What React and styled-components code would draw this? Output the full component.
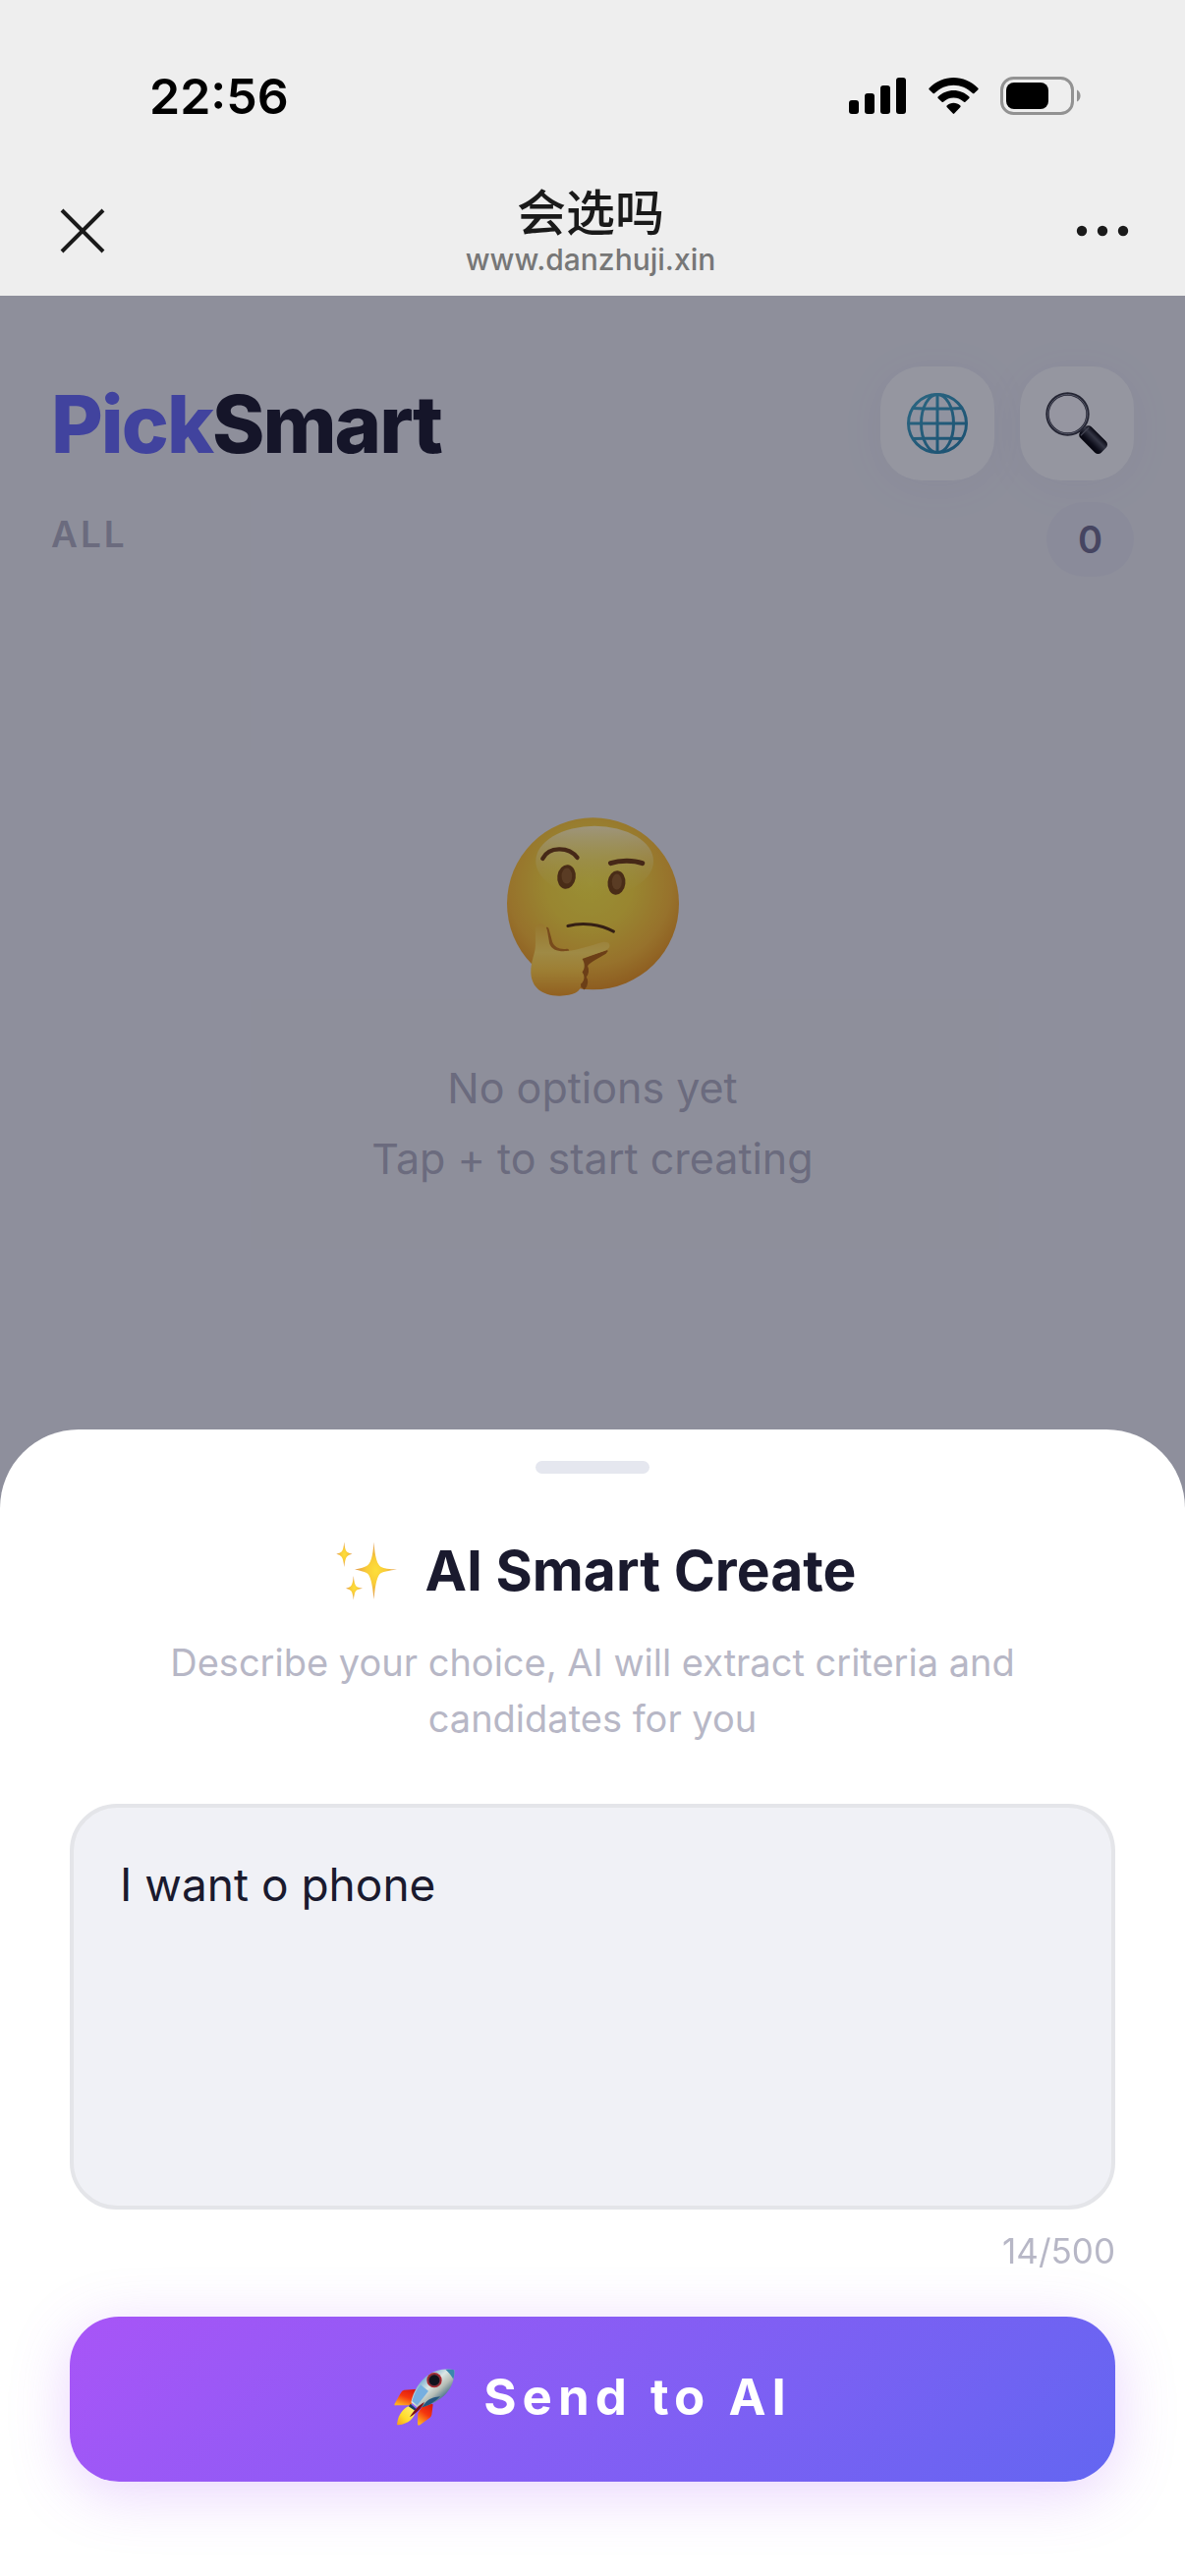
import { useState } from 'react';
import styled, { createGlobalStyle } from 'styled-components';

const MAX_LENGTH = 500;

const SignalIcon = () => (
  <svg width='59' height='38' viewBox='0 0 59 38' aria-hidden='true'>
    <rect x='0' y='23' width='10' height='14' rx='3' />
    <rect x='16' y='16' width='10' height='21' rx='3' />
    <rect x='32' y='8' width='10' height='29' rx='3' />
    <rect x='48' y='0' width='10' height='37' rx='3' />
  </svg>
);

const WifiIcon = () => (
  <svg width='51' height='38' viewBox='0 0 51 38' aria-hidden='true'>
    <path d='M.6 10.8C14.5-3.6 36.5-3.6 50.4 10.8Q51 11.5 50.4 12.2L46.4 16Q45.7 16.6 45 16C34 4.9 17 4.9 6 16Q5.3 16.6 4.6 16L.6 12.2Q0 11.5 .6 10.8Z' />
    <path d='M9.6 19.6C18.4 10.7 32.6 10.7 41.4 19.6Q42 20.3 41.4 21L37.4 24.7Q36.7 25.2 36 24.7C30 19 21 19 15 24.7Q14.3 25.2 13.6 24.7L9.6 21Q9 20.3 9.6 19.6Z' />
    <path d='M18.6 28.5C22.6 24.7 28.4 24.7 32.4 28.5Q33 29.2 32.4 29.9L26.2 36.6Q25.5 37.3 24.8 36.6L18.6 29.9Q18 29.2 18.6 28.5Z' />
  </svg>
);

const BatteryIcon = () => (
  <svg width='83' height='40' viewBox='0 0 83 40' aria-hidden='true'>
    <rect x='1.5' y='1.5' width='72' height='36' rx='12' fill='none' stroke='#929292' strokeWidth='3' />
    <rect x='6' y='6' width='43' height='27' rx='8' />
    <path d='M78 13.5C82.8 15.5 82.8 23.5 78 25.5Z' fill='#929292' />
  </svg>
);

const CloseIcon = () => (
  <svg width='46' height='46' viewBox='0 0 46 46' fill='none' stroke='#1a1a1a' strokeWidth='4' aria-hidden='true'>
    <path d='M2 2L44 44M44 2L2 44' />
  </svg>
);

const MoreIcon = () => (
  <svg width='54' height='12' viewBox='0 0 54 12' fill='#1a1a1a' aria-hidden='true'>
    <circle cx='6' cy='6' r='5.2' />
    <circle cx='27' cy='6' r='5.2' />
    <circle cx='48' cy='6' r='5.2' />
  </svg>
);

const GlobeIcon = () => (
  <svg width='64' height='64' viewBox='0 0 64 64' fill='none' aria-hidden='true'>
    <defs>
      <linearGradient id='globeLine' gradientUnits='userSpaceOnUse' x1='8' y1='4' x2='56' y2='60'>
        <stop offset='0' stopColor='#3d9fc0' />
        <stop offset='1' stopColor='#267fa8' />
      </linearGradient>
    </defs>
    <circle cx='32' cy='32' r='29.5' fill='#e6ebf3' />
    <g stroke='url(#globeLine)' strokeWidth='3'>
      <circle cx='32' cy='32' r='29.5' />
      <ellipse cx='32' cy='32' rx='16.5' ry='29.5' />
      <path d='M7 16.5Q32 17.5 57 16.5M7 47.5Q32 46.5 57 47.5M32 2V62M2 32H62' />
    </g>
  </svg>
);

const SearchIcon = () => (
  <svg width='64' height='64' viewBox='0 0 64 64' fill='none' aria-hidden='true'>
    <defs>
      <linearGradient id='handle' x1='0' y1='0' x2='0' y2='1'>
        <stop offset='0' stopColor='#05050a' />
        <stop offset='.35' stopColor='#4e515c' />
        <stop offset='.75' stopColor='#0c0d14' />
        <stop offset='1' stopColor='#000' />
      </linearGradient>
    </defs>
    <path d='M36 38L42 44' stroke='#55575f' strokeWidth='5' />
    <circle cx='22.5' cy='22.5' r='20.5' fill='#f0f1f5' stroke='#33343f' strokeWidth='3.4' />
    <circle cx='22.5' cy='22.5' r='20' stroke='#858896' strokeWidth='1' />
    <g transform='translate(38 38) rotate(45)'>
      <rect x='0' y='-8' width='30' height='16' rx='4.5' fill='url(#handle)' />
      <path d='M3-6V6' stroke='#6c6e79' strokeWidth='1.2' />
    </g>
  </svg>
);

const ThinkingFace = () => (
  <svg width='177' height='183' viewBox='101 96 532 550' fill='none' aria-hidden='true'>
    <defs>
      <radialGradient id='face' cx='.48' cy='.38' r='.64'>
        <stop offset='0' stopColor='#f7e43f' />
        <stop offset='.4' stopColor='#f5d53a' />
        <stop offset='.75' stopColor='#f2b432' />
        <stop offset='1' stopColor='#e08c1c' />
      </radialGradient>
      <linearGradient id='shine' x1='0' y1='0' x2='0' y2='1'>
        <stop offset='0' stopColor='#fff6d0' stopOpacity='.85' />
        <stop offset='1' stopColor='#f7e04a' stopOpacity='0' />
      </linearGradient>
      <linearGradient id='hand' gradientUnits='userSpaceOnUse' x1='0' y1='420' x2='0' y2='642'>
        <stop offset='0' stopColor='#f3bd35' />
        <stop offset='.4' stopColor='#ffdc5c' />
        <stop offset='.65' stopColor='#fcc93f' />
        <stop offset='1' stopColor='#e8961f' />
      </linearGradient>
    </defs>
    <circle cx='367' cy='360' r='263' fill='url(#face)' />
    <ellipse cx='372' cy='230' rx='180' ry='108' fill='url(#shine)' />
    <path d='M213 222C232 185 292 184 319 219' stroke='#6b3a10' strokeWidth='13' strokeLinecap='round' />
    <path d='M421 236C448 227 490 226 518 236' stroke='#6b3a10' strokeWidth='15' strokeLinecap='round' />
    <ellipse cx='286' cy='278' rx='28' ry='37' transform='rotate(8 286 278)' fill='#71400f' />
    <ellipse cx='439' cy='296' rx='27' ry='37' transform='rotate(6 439 296)' fill='#71400f' />
    <ellipse cx='287' cy='275' rx='16' ry='24' fill='#8c5a25' />
    <ellipse cx='440' cy='293' rx='15' ry='24' fill='#8c5a25' />
    <path d='M290 428C335 417 388 422 430 445' stroke='#4e2a0a' strokeWidth='9' strokeLinecap='round' />
    <path d='M226 438L238 482C246 500 262 507 288 504' stroke='#bf7418' strokeWidth='12' strokeLinecap='round' />
    <path
      d='M336 528L410 505L404 512C375 530 355 537 348 550C355 566 352 574 344 584C352 596 350 608 340 620L326 606Z'
      fill='#ab5f10'
      stroke='#ab5f10'
      strokeWidth='5'
      strokeLinejoin='round'
    />
    <path
      d='M191 446C189 414 221 414 227 442L234 482C240 500 259 507 286 505C324 502 360 488 396 478C421 473 426 495 405 503L334 529C343 542 343 560 334 569C344 582 340 597 330 605C333 629 306 642 266 642C212 643 179 617 177 572C176 535 190 515 191 488Z'
      fill='url(#hand)'
    />
  </svg>
);

const SparklesIcon = () => (
  <svg width='62' height='60' viewBox='0 0 62 60' aria-hidden='true'>
    <defs>
      <radialGradient id='spark'>
        <stop offset='0' stopColor='#fddf3a' />
        <stop offset='.45' stopColor='#f9cc38' />
        <stop offset='1' stopColor='#e0964c' />
      </radialGradient>
    </defs>
    <g fill='url(#spark)'>
      <path d='M38.5.5C39.5 16 42 24 46 26Q50 28 62 28.5Q50 30 46 32C42 34 40 43 38.5 59C37 43 35 34 31 32Q27 30 19 28.5Q27 27 31 25C35 23 37.5 16 38.5.5Z' />
      <path d='M8.3.5Q9 9 11 10.5Q12.5 12 16.5 12.7Q12.5 13.5 11 15.5Q9 18 8.3 26Q7.5 18 5.5 15.5Q4 13.5 .3 12.7Q4 12 5.5 10.5Q7.5 9 8.3.5Z' />
      <path d='M17.8 35Q18.5 43.5 20.5 45.5Q22 47 27 47.7Q22 48.5 20.5 50Q18.5 52 17.8 59.5Q17 52 15 50Q13.5 48.5 10 47.7Q13.5 47 15 45.5Q17 43.5 17.8 35Z' />
    </g>
  </svg>
);

const RocketIcon = () => (
  <svg width='64' height='61' viewBox='61 56 192 183' aria-hidden='true'>
    <defs>
      <linearGradient id='hull' x1='.2' y1='.2' x2='.8' y2='.8'>
        <stop offset='0' stopColor='#5f9fcb' />
        <stop offset='.4' stopColor='#dbe6e4' />
        <stop offset='.65' stopColor='#b5bdb5' />
        <stop offset='1' stopColor='#24567c' />
      </linearGradient>
      <linearGradient id='fin' x1='.8' y1='0' x2='.3' y2='1'>
        <stop offset='0' stopColor='#d8170f' />
        <stop offset='.5' stopColor='#f5370f' />
        <stop offset='1' stopColor='#ffae22' />
      </linearGradient>
      <linearGradient id='flame' x1='1' y1='0' x2='0' y2='1'>
        <stop offset='0' stopColor='#fff27d' />
        <stop offset='.6' stopColor='#ffdc2a' />
        <stop offset='1' stopColor='#f59a20' />
      </linearGradient>
    </defs>
    <path d='M136 124L95 127Q88 128 84 137L65 171Q64 175 70 174L116 174Z' fill='url(#fin)' />
    <path d='M183 171L179 203Q178 209 170 214L143 234Q136 238 136 230L137 198L158 166Z' fill='url(#fin)' />
    <path d='M248 66C249 92 242 117 224 137C204 159 170 178 135 181L116 165C123 130 142 99 170 80C194 64 222 61 248 66Z' fill='url(#hull)' />
    <path d='M248 66C249 76 248 85 245 94C240 84 232 74 221 64Q235 62 248 66Z' fill='#3a87ae' />
    <path d='M119 161C126 139 134 124 145 111L169 130Q153 151 135 174Z' fill='#76afe0' />
    <path d='M162 163C176 151 192 148 205 147C189 164 169 176 148 180Z' fill='#245680' />
    <circle cx='187' cy='97' r='23' fill='#b6282d' />
    <circle cx='187' cy='97' r='20' fill='#7b2f3c' />
    <circle cx='187' cy='97' r='16' fill='#10131d' />
    <path d='M114 169L131 184L126 193L108 179Z' fill='#173f63' />
    <path d='M108 177L130 192C127 212 108 231 78 234Q71 235 74 226C78 203 91 184 108 177Z' fill='url(#flame)' />
    <path d='M157 164C140 173 124 189 112 210C133 197 147 184 157 164Z' fill='#7d0f16' />
  </svg>
);

const App = () => {
  const [prompt, setPrompt] = useState('I want o phone');

  return (
    <Page>
      <GlobalStyle />
      <TopArea>
        <StatusBar>
          <Clock>22:56</Clock>
          <StatusIcons>
            <SignalIcon />
            <WifiIcon />
            <BatteryIcon />
          </StatusIcons>
        </StatusBar>
        <NavBar>
          <NavButton aria-label='Close'>
            <CloseIcon />
          </NavButton>
          <SiteInfo>
            <SiteName lang='zh-CN'>会选吗</SiteName>
            <SiteUrl>www.danzhuji.xin</SiteUrl>
          </SiteInfo>
          <NavButton aria-label='More'>
            <MoreIcon />
          </NavButton>
        </NavBar>
      </TopArea>

      <Main>
        <BrandRow>
          <Brand>
            <span>Pick</span>Smart
          </Brand>
          <Actions>
            <ActionButton aria-label='Language'>
              <GlobeIcon />
            </ActionButton>
            <ActionButton aria-label='Search'>
              <SearchIcon />
            </ActionButton>
          </Actions>
        </BrandRow>
        <ListHeader>
          <ListTitle>ALL</ListTitle>
          <CountBadge>0</CountBadge>
        </ListHeader>
        <Empty>
          <ThinkingFace />
          <EmptyText>
            No options yet
            <br />
            Tap + to start creating
          </EmptyText>
        </Empty>
        <Overlay />
      </Main>

      <Sheet role='dialog' aria-labelledby='sheet-title'>
        <Handle />
        <SheetTitle id='sheet-title'>
          <SparklesIcon />
          AI Smart Create
        </SheetTitle>
        <SheetHint id='sheet-hint'>Describe your choice, AI will extract criteria and candidates for you</SheetHint>
        <PromptBox
          aria-labelledby='sheet-title'
          aria-describedby='sheet-hint'
          maxLength={MAX_LENGTH}
          value={prompt}
          onChange={e => setPrompt(e.target.value)}
        />
        <Counter>
          {prompt.length}/{MAX_LENGTH}
        </Counter>
        <SendButton type='button'>
          <RocketIcon />
          Send to AI
        </SendButton>
      </Sheet>
    </Page>
  );
};

export default App;

const GlobalStyle = createGlobalStyle`
  * {
    box-sizing: border-box;
    margin: 0;
    padding: 0;
  }
  body {
    font-family: Inter, 'Noto Sans CJK SC', sans-serif;
    color: #1a1a2e;
    background-color: #fff;
  }
  button {
    border: none;
    background: none;
    font-family: inherit;
    cursor: pointer;
  }
  svg {
    display: block;
    flex-shrink: 0;
  }
`;

const Page = styled.div`
  display: flex;
  flex-direction: column;
  min-height: 100vh;
`;

const TopArea = styled.header`
  background-color: #eee;
`;

const StatusBar = styled.div`
  display: flex;
  justify-content: space-between;
  align-items: center;
  padding: 68px 105px 0 152px;
  color: #000;
`;

const Clock = styled.span`
  font-size: 50px;
  font-weight: 600;
  line-height: 60px;
`;

const StatusIcons = styled.div`
  display: flex;
  align-items: center;
  gap: 22px;
`;

const NavBar = styled.nav`
  display: flex;
  justify-content: space-between;
  align-items: center;
  padding: 60px 57px 19px 61px;
`;

const NavButton = styled.button`
  display: flex;
  align-items: center;
  min-height: 48px;
`;

const SiteInfo = styled.div`
  text-align: center;
`;

const SiteName = styled.h1`
  font-size: 50px;
  font-weight: 500;
  line-height: 58px;
  color: #1a1a1a;
`;

const SiteUrl = styled.p`
  font-size: 30px;
  font-weight: 500;
  line-height: 36px;
  color: #777;
`;

const Main = styled.main`
  position: relative;
  flex: 1;
  padding: 72px 52px;
  background-color: #e3e5ec;
`;

const BrandRow = styled.div`
  display: flex;
  justify-content: space-between;
  align-items: center;
`;

const Brand = styled.h2`
  padding-top: 2px;
  font-size: 81px;
  font-weight: 800;
  letter-spacing: -2px;
  line-height: 100px;
  span {
    color: #6366f1;
  }
`;

const Actions = styled.div`
  display: flex;
  gap: 26px;
`;

const ActionButton = styled.button`
  display: flex;
  justify-content: center;
  align-items: center;
  width: 116px;
  height: 116px;
  border-radius: 42px;
  background-color: #eff1f4;
  box-shadow: 0 6px 48px rgba(99, 102, 180, 0.06);
`;

const ListHeader = styled.div`
  display: flex;
  justify-content: space-between;
  align-items: flex-start;
  margin-top: 22px;
`;

const ListTitle = styled.h3`
  font-size: 37px;
  font-weight: 600;
  letter-spacing: 3px;
  line-height: 66px;
  color: #a8a9bb;
`;

const CountBadge = styled.span`
  min-width: 88px;
  padding: 0 32px;
  border-radius: 38px;
  background-color: #dddeea;
  font-size: 38px;
  font-weight: 600;
  line-height: 76px;
  text-align: center;
  color: #6b6a8a;
`;

const Empty = styled.div`
  display: flex;
  flex-direction: column;
  align-items: center;
  gap: 56px;
  padding-top: 245px;
`;

const EmptyText = styled.p`
  font-size: 43px;
  line-height: 72px;
  text-align: center;
  color: #a8a9bb;
`;

const Overlay = styled.div`
  position: absolute;
  inset: 0;
  background-color: rgba(15, 15, 35, 0.4);
`;

const Sheet = styled.section`
  position: fixed;
  right: 0;
  bottom: 0;
  left: 0;
  display: flex;
  flex-direction: column;
  padding: 32px 71px 96px;
  border-radius: 80px 80px 0 0;
  background-color: #fff;
`;

const Handle = styled.div`
  align-self: center;
  width: 116px;
  height: 13px;
  border-radius: 7px;
  background-color: #e5e7ef;
`;

const SheetTitle = styled.h2`
  display: flex;
  justify-content: center;
  align-items: center;
  gap: 28px;
  margin-top: 63px;
  padding-left: 8px;
  font-size: 57px;
  font-weight: 700;
  line-height: 72px;
`;

const SheetHint = styled.p`
  margin-top: 29px;
  padding: 0 80px;
  font-size: 38px;
  line-height: 57px;
  text-align: center;
  color: #b7b7c6;
`;

const PromptBox = styled.textarea`
  display: block;
  width: 100%;
  height: 413px;
  margin-top: 58px;
  padding: 43px 47px;
  border: 4px solid #e4e5e9;
  border-radius: 48px;
  outline: none;
  background-color: #f0f1f6;
  font-family: inherit;
  font-size: 46px;
  line-height: 70px;
  color: #1a1a2e;
  resize: none;
`;

const Counter = styled.p`
  margin-top: 20px;
  font-size: 35px;
  line-height: 44px;
  text-align: right;
  color: #b7b7c6;
`;

const SendButton = styled.button`
  display: flex;
  justify-content: center;
  align-items: center;
  gap: 28px;
  height: 168px;
  margin-top: 45px;
  padding-bottom: 6px;
  border-radius: 50px;
  background: linear-gradient(135deg, #a855f7, #6366f1);
  box-shadow: 0 12px 60px rgba(168, 85, 247, 0.25);
  font-size: 51px;
  font-weight: 700;
  letter-spacing: 6px;
  color: #fff;
`;
